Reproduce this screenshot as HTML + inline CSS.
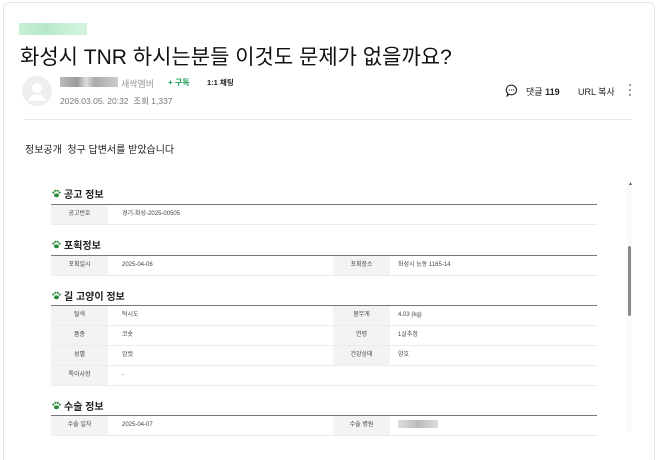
<!DOCTYPE html>
<html style="width:658px;height:460px;overflow:hidden"><head><meta charset="utf-8"><style>
*{margin:0;padding:0;box-sizing:border-box}
body{width:658px;height:460px;background:#fff;font-family:"Liberation Sans","Noto Sans CJK KR",sans-serif;color:#222;position:relative;overflow:hidden}
.card{position:absolute;left:3px;top:2px;width:652px;height:458px;border:1px solid #e6e6e6;border-bottom:none;border-radius:6px 6px 0 0}
.a{position:absolute;white-space:nowrap}
.h{position:absolute;left:52px;font-size:10px;font-weight:bold;color:#222;display:flex;align-items:center}
.h svg{margin-right:3px}
.tb{position:absolute;left:51px;width:546px;border-top:1.5px solid #777}
.row{display:flex;height:20px;border-bottom:1px solid #ececec;font-size:6px;color:#444;align-items:center;line-height:19px}
.l{width:57px;background:#f3f3f3;height:100%;text-align:center}
.v{width:225px;padding-left:14px}
.v2{padding-left:8px}
</style></head><body>
<div class="card"></div>
<div class="a" style="left:19px;top:23px;width:68px;height:12px;background:linear-gradient(90deg,#c8efd6,#b5e8c8 40%,#c9f0d7 70%,#d3f3de)"></div>
<div class="a" style="left:20px;top:41px;font-size:21px;color:#111">화성시 TNR 하시는분들 이것도 문제가 없을까요?</div>
<svg class="a" style="left:22px;top:76px" width="30" height="30" viewBox="0 0 30 30"><circle cx="15" cy="15" r="15" fill="#eee"/><circle cx="15" cy="12" r="5" fill="#fff"/><path d="M6 25c2-5 5-7 9-7s7 2 9 7" fill="#fff"/></svg>
<div class="a" style="left:60px;top:77px;width:58px;height:10px;background:linear-gradient(90deg,#bbb,#999 30%,#ddd 45%,#aaa 60%,#ccc)"></div>
<div class="a" style="left:121px;top:77px;font-size:9px;color:#999">새싹멤버</div>
<div class="a" style="left:168px;top:77px;font-size:8px;color:#1ea05a;font-weight:bold">+ 구독</div>
<div class="a" style="left:207px;top:77px;font-size:7.5px;font-weight:bold;color:#222">1:1 채팅</div>
<div class="a" style="left:60px;top:95px;font-size:8.5px;color:#777">2026.03.05. 20:32 &nbsp;조회 1,337</div>
<svg class="a" style="left:505px;top:84px" width="13" height="13" viewBox="0 0 13 13"><path d="M6.5 1.2a5.2 4.8 0 1 1-2.5 9.1L2.2 12l.5-2.6A4.8 4.8 0 0 1 6.5 1.2z" fill="none" stroke="#222" stroke-width="1.1"/><circle cx="4.3" cy="6" r=".6" fill="#222"/><circle cx="6.5" cy="6" r=".6" fill="#222"/><circle cx="8.7" cy="6" r=".6" fill="#222"/></svg>
<div class="a" style="left:526px;top:85px;font-size:9px;color:#222">댓글 <b>119</b></div>
<div class="a" style="left:578px;top:85px;font-size:9px;color:#222">URL 복사</div>
<svg class="a" style="left:628px;top:83px" width="4" height="14"><circle cx="2" cy="2" r="1" fill="#777"/><circle cx="2" cy="7" r="1" fill="#777"/><circle cx="2" cy="12" r="1" fill="#777"/></svg>
<div class="a" style="left:24px;top:119px;width:608px;border-top:1px solid #e8e8e8"></div>
<div class="a" style="left:25px;top:141px;font-size:10px;color:#222">정보공개 &nbsp;청구 답변서를 받았습니다</div>

<div class="a" style="left:627px;top:183px;width:5px;height:249px;background:#fafafa"></div>
<div class="a" style="left:628px;top:181px;font-size:5px;color:#555">▲</div>
<div class="a" style="left:628px;top:246px;width:3px;height:70px;background:#8a8a8a;border-radius:2px"></div>

<div class="h" style="top:186px"><svg width="9" height="9" viewBox="0 0 10 10" fill="#2a8a3a"><ellipse cx="5" cy="7" rx="2.8" ry="2.2"/><circle cx="1.5" cy="4" r="1.2"/><circle cx="3.7" cy="2" r="1.2"/><circle cx="6.3" cy="2" r="1.2"/><circle cx="8.5" cy="4" r="1.2"/></svg>공고 정보</div>
<div class="tb" style="top:204px"><div class="row"><div class="l">공고번호</div><div class="v">경기-화성-2025-00505</div></div></div>

<div class="h" style="top:237px"><svg width="9" height="9" viewBox="0 0 10 10" fill="#2a8a3a"><ellipse cx="5" cy="7" rx="2.8" ry="2.2"/><circle cx="1.5" cy="4" r="1.2"/><circle cx="3.7" cy="2" r="1.2"/><circle cx="6.3" cy="2" r="1.2"/><circle cx="8.5" cy="4" r="1.2"/></svg>포획정보</div>
<div class="tb" style="top:255px"><div class="row"><div class="l">포획일시</div><div class="v">2025-04-06</div><div class="l">포획장소</div><div class="v2">화성시 능동 1165-14</div></div></div>

<div class="h" style="top:288px"><svg width="9" height="9" viewBox="0 0 10 10" fill="#2a8a3a"><ellipse cx="5" cy="7" rx="2.8" ry="2.2"/><circle cx="1.5" cy="4" r="1.2"/><circle cx="3.7" cy="2" r="1.2"/><circle cx="6.3" cy="2" r="1.2"/><circle cx="8.5" cy="4" r="1.2"/></svg>길 고양이 정보</div>
<div class="tb" style="top:305px">
<div class="row"><div class="l">털색</div><div class="v">턱시도</div><div class="l">몸무게</div><div class="v2">4.03 (kg)</div></div>
<div class="row"><div class="l">품종</div><div class="v">코숏</div><div class="l">연령</div><div class="v2">1살추정</div></div>
<div class="row"><div class="l">성별</div><div class="v">암컷</div><div class="l">건강상태</div><div class="v2">양호</div></div>
<div class="row"><div class="l">특이사항</div><div class="v">-</div></div>
</div>

<div class="h" style="top:398px"><svg width="9" height="9" viewBox="0 0 10 10" fill="#2a8a3a"><ellipse cx="5" cy="7" rx="2.8" ry="2.2"/><circle cx="1.5" cy="4" r="1.2"/><circle cx="3.7" cy="2" r="1.2"/><circle cx="6.3" cy="2" r="1.2"/><circle cx="8.5" cy="4" r="1.2"/></svg>수술 정보</div>
<div class="tb" style="top:415px"><div class="row"><div class="l">수술 일자</div><div class="v">2025-04-07</div><div class="l">수술 병원</div><div class="v2"><span style="display:inline-block;width:40px;height:8px;vertical-align:middle;background:linear-gradient(90deg,#ddd,#bbb 50%,#ddd)"></span></div></div></div>
</body></html>
